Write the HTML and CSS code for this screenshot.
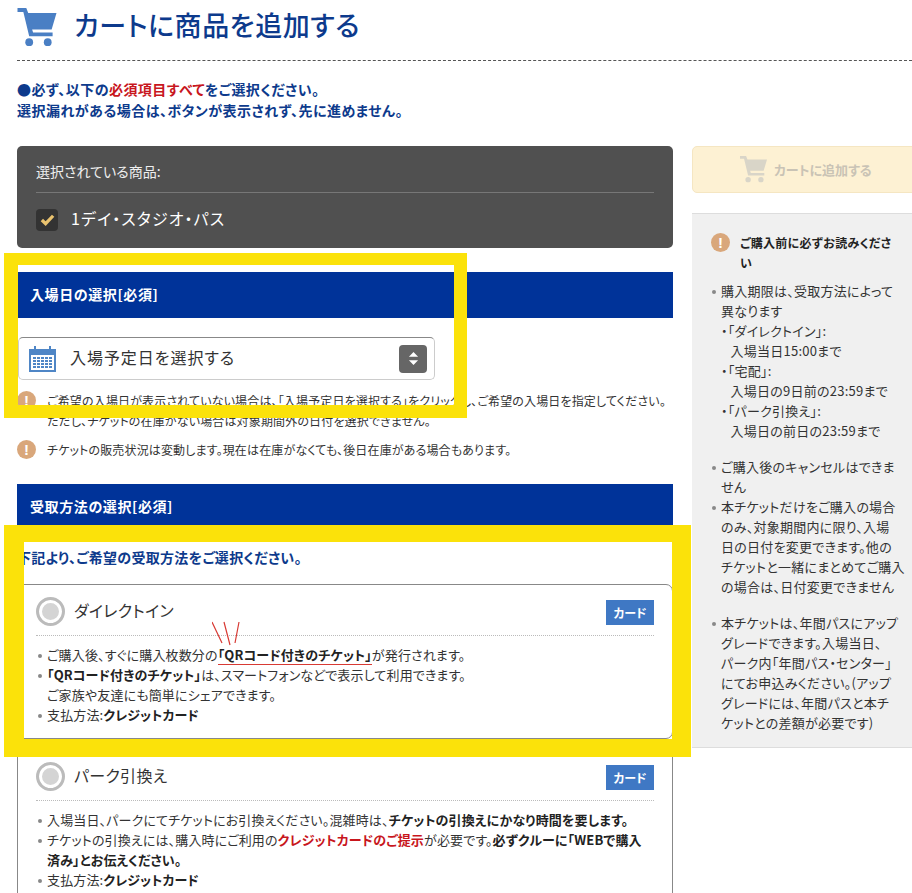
FILE: index.html
```html
<!DOCTYPE html>
<html lang="ja">
  <head>
    <meta charset="UTF-8" />
    <title>カートに商品を追加する</title>
    <link rel="stylesheet" href="styles.css">
  </head>
  <body>
    <div class="page">
      <header class="title">
        <svg class="title-cart" viewBox="0 0 40 40"><path d="M0 0h9l2 5h29l-5 17H15l1 3h20v4H12L6 4H0z"/><circle cx="12" cy="35" r="4"/><circle cx="31" cy="35" r="4"/></svg>
        <h1>カートに商品を追加する</h1>
      </header>
      <p class="lead"><span class="dot">●</span>必ず、以下の<em>必須項目すべて</em>をご選択ください。<br>選択漏れがある場合は、ボタンが表示されず、先に進めません。</p>

      <div class="cols">
        <main class="left">
          <section class="selected">
            <p class="selected-label">選択されている商品:</p>
            <div class="selected-item">
              <span class="check"><svg viewBox="0 0 16 16"><path d="M2 8.500l4 4 8-8.500"/></svg></span>
              <span class="selected-name">1デイ・スタジオ・パス</span>
            </div>
          </section>

          <h2 class="bar">入場日の選択[必須]</h2>
          <div class="picker">
            <svg class="cal" viewBox="0 0 27 27"><path d="M0 4h5V1h2v3h13V1h2v3h5v23H0z" fill="#4f86c6"/><rect x="2" y="10" width="23" height="15" fill="#fff"/><path d="M4 12h19v2H4zM4 15h19v2H4zM4 18h19v2H4zM4 21h19v2H4z" fill="#4f86c6"/><path d="M7 12h1v11H7zM11 12h1v11h-1zM15 12h1v11h-1zM19 12h1v11h-1z" fill="#fff"/></svg>
            <span class="picker-text">入場予定日を選択する</span>
            <span class="sort"><svg viewBox="0 0 12 16"><path d="M6 1l5 5H1zM6 15l-5-5h10z"/></svg></span>
          </div>
          <div class="note">
            <span class="alert">!</span>
            <p>ご希望の入場日が表示されていない場合は、「入場予定日を選択する」をクリックし、ご希望の入場日を指定してください。<br>ただし、チケットの在庫がない場合は対象期間外の日付を選択できません。</p>
          </div>
          <div class="note">
            <span class="alert">!</span>
            <p>チケットの販売状況は変動します。現在は在庫がなくても、後日在庫がある場合もあります。</p>
          </div>

          <h2 class="bar bar-second">受取方法の選択[必須]</h2>
          <p class="pick-lead">下記より、ご希望の受取方法をご選択ください。</p>

          <article class="method">
            <div class="method-head">
              <span class="radio"></span>
              <h3>ダイレクトイン</h3>
              <span class="badge">カード</span>
            </div>
            <ul class="points">
              <li>ご購入後、すぐに購入枚数分の<b class="marked">「QRコード付きのチケット」</b>が発行されます。</li>
              <li><b>「QRコード付きのチケット」</b>は、スマートフォンなどで表示して利用できます。<br>ご家族や友達にも簡単にシェアできます。</li>
              <li>支払方法:<b>クレジットカード</b></li>
            </ul>
          </article>

          <article class="method">
            <div class="method-head">
              <span class="radio"></span>
              <h3>パーク引換え</h3>
              <span class="badge">カード</span>
            </div>
            <ul class="points">
              <li>入場当日、パークにてチケットにお引換えください。混雑時は、<b>チケットの引換えにかなり時間を要します。</b></li>
              <li>チケットの引換えには、購入時にご利用の<b class="red">クレジットカードのご提示</b>が必要です。<b>必ずクルーに「WEBで購入<br>済み」とお伝えください。</b></li>
              <li>支払方法:<b>クレジットカード</b></li>
            </ul>
          </article>
        </main>

        <aside class="right">
          <div class="add">
            <svg class="add-cart" viewBox="0 0 40 40"><path d="M0 0h9l2 5h29l-5 17H15l1 3h20v4H12L6 4H0z"/><circle cx="12" cy="35" r="4"/><circle cx="31" cy="35" r="4"/></svg>
            <span>カートに追加する</span>
          </div>
          <div class="panel">
            <div class="panel-head">
              <span class="alert">!</span>
              <h4>ご購入前に必ずお読みください</h4>
            </div>
            <ul class="points panel-list">
              <li>購入期限は、受取方法によって<br>異なります<br>・「ダイレクトイン」:<br>&nbsp;&nbsp;&nbsp;入場当日15:00まで<br>・「宅配」:<br>&nbsp;&nbsp;&nbsp;入場日の9日前の23:59まで<br>・「パーク引換え」:<br>&nbsp;&nbsp;&nbsp;入場日の前日の23:59まで</li>
            </ul>
            <ul class="points panel-list">
              <li>ご購入後のキャンセルはできま<br>せん</li>
              <li>本チケットだけをご購入の場合<br>のみ、対象期間内に限り、入場<br>日の日付を変更できます。他の<br>チケットと一緒にまとめてご購入<br>の場合は、日付変更できません</li>
            </ul>
            <ul class="points panel-list">
              <li>本チケットは、年間パスにアップ<br>グレードできます。入場当日、<br>パーク内「年間パス・センター」<br>にてお申込みください。(アップ<br>グレードには、年間パスと本チ<br>ケットとの差額が必要です)</li>
            </ul>
          </div>
        </aside>
      </div>

      <!-- annotations drawn on top of the page -->
      <div class="frame frame-date"></div>
      <div class="frame frame-method"></div>
      <svg class="scribble" viewBox="0 0 30 30"><path d="M0 2l10 21M12 2l6 23M27 2l-4 21" fill="none" stroke="#d83a34" stroke-width="1.2"/></svg>
    </div>
  </body>
</html>
```

FILE: styles.css
```css
html, body {
  margin: 0;
  height: 893px;
  overflow: hidden;
  background: #fff;
}
body {
  font-family: "Noto Sans CJK JP", "Liberation Sans", sans-serif;
  font-feature-settings: "palt";
  color: #333;
}
h1, h2, h3, h4, p, ul {
  margin: 0;
  padding: 0;
  font-weight: normal;
}
b {
  font-weight: bold;
}
.page {
  position: relative;
  width: 912px;
  height: 893px;
  overflow: hidden;
  padding-left: 17px;
  box-sizing: border-box;
}

/* title */
.title {
  display: flex;
  align-items: center;
  gap: 17px;
  width: 895px;
  height: 61px;
  padding-top: 5px;
  padding-bottom: 11px;
  box-sizing: border-box;
  border-bottom: 1px dashed #555;
}
.title-cart {
  width: 40px;
  height: 39px;
  fill: #4a7fc4;
}
h1 {
  margin-bottom: 5px;
  font-size: 27px;
  font-weight: 500;
  letter-spacing: 0.55px;
  line-height: 40px;
  color: #0d3a8c;
}
.lead {
  margin-top: 18px;
  margin-bottom: 25px;
  font-size: 14px;
  font-weight: bold;
  letter-spacing: 0.45px;
  line-height: 21px;
  color: #0d3a8c;
}
.lead em {
  font-style: normal;
  color: #c8161d;
}
.dot {
  color: #0d3a8c;
}

.cols {
  display: flex;
  gap: 19px;
  align-items: flex-start;
}
.left {
  flex: none;
  width: 656px;
}
.right {
  flex: none;
  width: 240px;
}

/* chosen product */
.selected {
  height: 102px;
  box-sizing: border-box;
  padding: 0 19px;
  border-radius: 5px;
  background: #505050;
  color: #eee;
}
.selected-label {
  height: 46px;
  line-height: 50px;
  font-size: 14px;
  border-bottom: 1px solid #777;
}
.selected-item {
  display: flex;
  align-items: center;
  gap: 13px;
  height: 53px;
  font-size: 16px;
  letter-spacing: 1.1px;
  color: #fff;
}
.selected-name {
  margin-bottom: 3px;
}
.check {
  display: flex;
  align-items: center;
  justify-content: center;
  width: 22px;
  height: 22px;
  border-radius: 4px;
  background: #333;
}
.check svg {
  width: 15px;
  height: 15px;
  fill: none;
  stroke: #eac36f;
  stroke-width: 3.5;
}

/* section bars */
.bar {
  height: 46px;
  margin-top: 24px;
  padding-left: 13px;
  font-size: 14px;
  font-weight: bold;
  letter-spacing: 0.6px;
  line-height: 45px;
  color: #fff;
  background: #003399;
}
.bar-second {
  margin-top: 24px;
}

/* date picker */
.picker {
  display: flex;
  align-items: center;
  width: 417px;
  height: 43px;
  margin: 19px 0 0 1px;
  padding: 0 7px 0 10px;
  box-sizing: border-box;
  border: 1px solid #ccc;
  border-top-color: #888;
  border-radius: 5px;
}
.cal {
  width: 27px;
  height: 27px;
}
.picker-text {
  flex: 1;
  margin-left: 14px;
  margin-bottom: 3px;
  font-size: 16px;
  letter-spacing: 0.95px;
}
.sort {
  display: flex;
  align-items: center;
  justify-content: center;
  width: 28px;
  height: 28px;
  border-radius: 4px;
  background: #666;
}
.sort svg {
  width: 11px;
  height: 15px;
  fill: #fff;
}

/* notes */
.note {
  display: flex;
  gap: 11px;
  margin-top: 11px;
  font-size: 12px;
  letter-spacing: 0.15px;
  line-height: 20px;
}
.note + .note {
  margin-top: 9px;
}
.alert {
  flex: none;
  width: 19px;
  height: 19px;
  border-radius: 50%;
  background: #d9a77b;
  color: #fff;
  font-family: "Liberation Sans", sans-serif;
  font-size: 15px;
  font-weight: bold;
  line-height: 19px;
  text-align: center;
}

/* pickup methods */
.pick-lead {
  margin-top: 17px;
  font-size: 14px;
  font-weight: bold;
  letter-spacing: 0.3px;
  line-height: 20px;
  color: #0d3a8c;
}
.method {
  margin-top: 17px;
  padding: 0 18px 13px;
  border: 1px solid #888;
  border-radius: 7px;
  background: #fff;
}
.method + .method {
  margin-top: 10px;
}
.method-head {
  display: flex;
  align-items: center;
  height: 50px;
  border-bottom: 1px dotted #bbb;
}
.radio {
  display: flex;
  align-items: center;
  justify-content: center;
  box-sizing: border-box;
  width: 29px;
  height: 29px;
  margin-top: 3px;
  border: 3px solid #bbb;
  border-radius: 50%;
  box-shadow: inset 0 0 0 3px #fff;
  background: #d4d4d4;
}
.method h3 {
  flex: 1;
  margin-left: 9px;
  font-size: 16px;
  letter-spacing: 0.3px;
  color: #333;
}
.badge {
  width: 48px;
  height: 25px;
  margin-top: 4px;
  background: #3f78c4;
  color: #fff;
  font-size: 12px;
  font-weight: bold;
  line-height: 25px;
  text-align: center;
}

.points {
  list-style: none;
  padding-top: 9px;
  font-size: 13px;
  letter-spacing: 0.15px;
  line-height: 20px;
}
.points li {
  padding-left: 11px;
}
.points li::before {
  content: "";
  display: inline-block;
  width: 4px;
  height: 4px;
  margin-left: -9px;
  margin-right: 5px;
  border-radius: 50%;
  vertical-align: middle;
  background: #888;
}
.points b {
  color: #222;
}
.points .red {
  color: #c8161d;
}
.marked {
  border-bottom: 1px solid #d83a34;
}

/* right column */
.add {
  display: flex;
  align-items: center;
  gap: 7px;
  height: 47px;
  padding-left: 47px;
  box-sizing: border-box;
  border: 1px solid #f5e6c2;
  border-radius: 5px 0 0 5px;
  background: #fdf1d3;
  font-size: 13px;
  font-weight: bold;
  color: #c9c3b5;
}
.add-cart {
  width: 27px;
  height: 27px;
  fill: #d9d5c8;
}
.panel {
  height: 535px;
  margin-top: 20px;
  padding: 19px 19px 0 19px;
  box-sizing: border-box;
  border-top: 1px solid #ddd;
  border-bottom: 1px solid #ddd;
  background: #f0f0f0;
}
.panel-head {
  display: flex;
  gap: 10px;
  margin-bottom: 8px;
}
.panel-head h4 {
  width: 155px;
  font-size: 12px;
  font-weight: bold;
  letter-spacing: 0.3px;
  line-height: 20px;
  color: #222;
}
.panel-list {
  padding-top: 0;
  margin-bottom: 16px;
  margin-left: -1px;
  letter-spacing: 0.25px;
  color: #333;
}

/* yellow frames and red marks */
.frame {
  position: absolute;
  box-sizing: border-box;
  border: solid #fbe20a;
}
.frame-date {
  left: 4px;
  top: 253px;
  width: 463px;
  height: 165px;
  border-width: 12px 13px 13px 14px;
}
.frame-method {
  left: 4px;
  top: 525px;
  width: 687px;
  height: 232px;
  border-width: 17px 19px 18px 20px;
}
.scribble {
  position: absolute;
  left: 212px;
  top: 620px;
  width: 30px;
  height: 30px;
}
```
